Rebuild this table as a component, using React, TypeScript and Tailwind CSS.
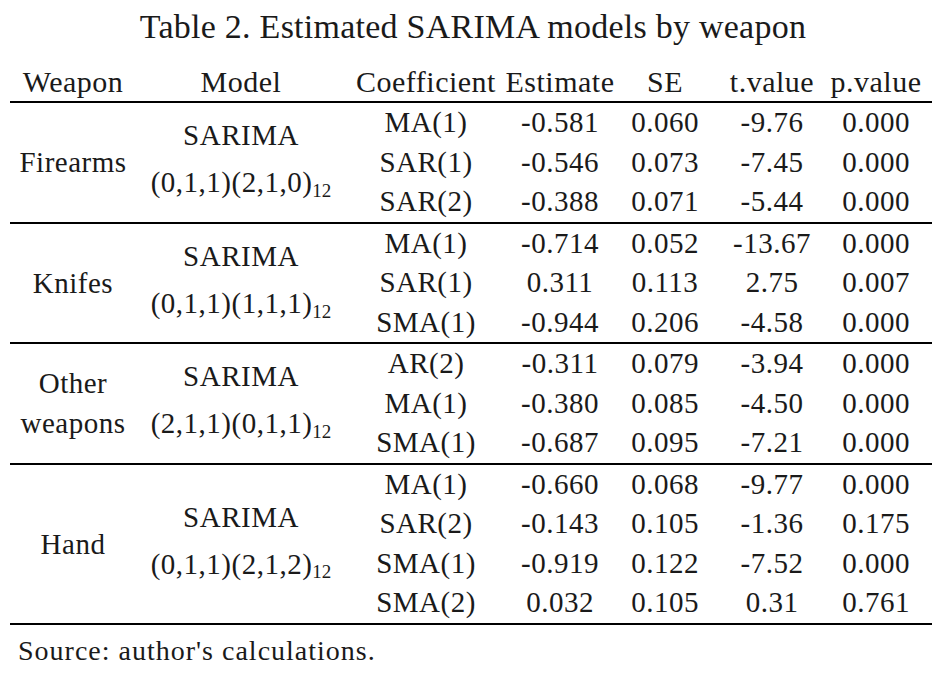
import React, { FC } from "react";

interface CoefRow {
  coef: string;
  est: string;
  se: string;
  t: string;
  p: string;
}

interface Group {
  weapon: string[];
  order: string; // non-seasonal and seasonal order
  rows: CoefRow[];
}

const groups: Group[] = [
  {
    weapon: ["Firearms"],
    order: "(0,1,1)(2,1,0)",
    rows: [
      { coef: "MA(1)", est: "-0.581", se: "0.060", t: "-9.76", p: "0.000" },
      { coef: "SAR(1)", est: "-0.546", se: "0.073", t: "-7.45", p: "0.000" },
      { coef: "SAR(2)", est: "-0.388", se: "0.071", t: "-5.44", p: "0.000" },
    ],
  },
  {
    weapon: ["Knifes"],
    order: "(0,1,1)(1,1,1)",
    rows: [
      { coef: "MA(1)", est: "-0.714", se: "0.052", t: "-13.67", p: "0.000" },
      { coef: "SAR(1)", est: "0.311", se: "0.113", t: "2.75", p: "0.007" },
      { coef: "SMA(1)", est: "-0.944", se: "0.206", t: "-4.58", p: "0.000" },
    ],
  },
  {
    weapon: ["Other", "weapons"],
    order: "(2,1,1)(0,1,1)",
    rows: [
      { coef: "AR(2)", est: "-0.311", se: "0.079", t: "-3.94", p: "0.000" },
      { coef: "MA(1)", est: "-0.380", se: "0.085", t: "-4.50", p: "0.000" },
      { coef: "SMA(1)", est: "-0.687", se: "0.095", t: "-7.21", p: "0.000" },
    ],
  },
  {
    weapon: ["Hand"],
    order: "(0,1,1)(2,1,2)",
    rows: [
      { coef: "MA(1)", est: "-0.660", se: "0.068", t: "-9.77", p: "0.000" },
      { coef: "SAR(2)", est: "-0.143", se: "0.105", t: "-1.36", p: "0.175" },
      { coef: "SMA(1)", est: "-0.919", se: "0.122", t: "-7.52", p: "0.000" },
      { coef: "SMA(2)", est: "0.032", se: "0.105", t: "0.31", p: "0.761" },
    ],
  },
];

const headers = ["Weapon", "Model", "Coefficient", "Estimate", "SE", "t.value", "p.value"];

const App: FC = () => {
  return (
    <div className="w-[946px] h-[674px] bg-white text-[#1a1a1a] font-[family-name:Liberation_Serif,Times_New_Roman,serif]">
      {/* title */}
      <div className="h-[62px] pt-[7px] text-center text-[34px] leading-[40px] tracking-[0.25px]">
        Table 2. Estimated SARIMA models by weapon
      </div>

      <div className="ml-[10px] w-[922px]">
        {/* header */}
        <div className="grid grid-cols-[126px_210px_160px_108px_102px_112px_96px] h-[41px] border-b-2 border-black text-[30px] leading-[39px] tracking-[0.5px]">
          {headers.map((h) => (
            <div key={h} className="flex justify-center whitespace-nowrap">
              {h}
            </div>
          ))}
        </div>

        {groups.map((g, i) => (
          <div key={i} className="flex border-b-2 border-black text-[29px] tracking-[0.5px]">
            <div className="w-[126px] flex flex-col items-center justify-center leading-[40px]">
              {g.weapon.map((w) => (
                <span key={w}>{w}</span>
              ))}
            </div>
            <div className="w-[210px] flex flex-col items-center justify-center leading-[47px] pb-[6px]">
              <span>SARIMA</span>
              <span className="whitespace-nowrap">
                {g.order}
                <sub className="text-[19px] tracking-normal">12</sub>
              </span>
            </div>
            <div className="flex flex-col">
              {g.rows.map((r, j) => (
                <div
                  key={j}
                  className="grid grid-cols-[160px_108px_102px_112px_96px] h-[39.5px] items-center leading-[39.5px]"
                >
                  <div className="flex justify-center whitespace-nowrap">{r.coef}</div>
                  <div className="flex justify-center">{r.est}</div>
                  <div className="flex justify-center">{r.se}</div>
                  <div className="flex justify-center">{r.t}</div>
                  <div className="flex justify-center">{r.p}</div>
                </div>
              ))}
            </div>
          </div>
        ))}
      </div>

      <div className="pl-[18px] mt-[10px] text-[28px] leading-[32px] tracking-[1px]">
        Source: author's calculations.
      </div>
    </div>
  );
};

export default App;
